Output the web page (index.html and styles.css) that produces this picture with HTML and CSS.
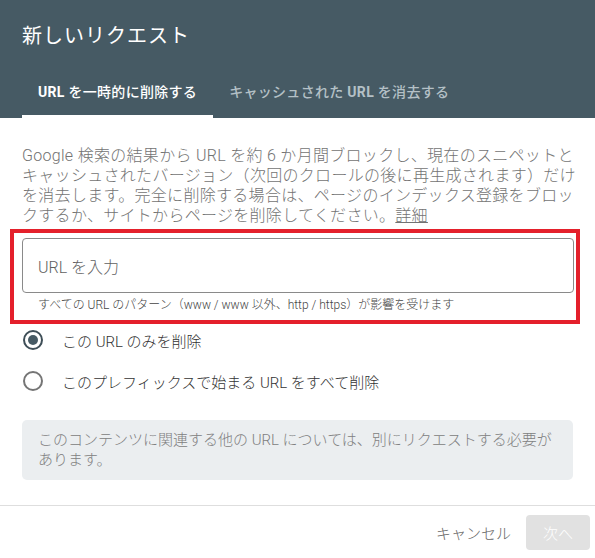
FILE: index.html
```html
<!DOCTYPE html>
<html lang="ja">
<head>
<meta charset="utf-8">
<title>新しいリクエスト</title>
<link rel="stylesheet" href="styles.css">
</head>
<body>
<div class="dialog">
  <header class="head">
    <h1 class="title">新しいリクエスト</h1>
    <nav class="tabs">
      <div class="tab active"><b>URL</b> を一時的に削除する</div>
      <div class="tab">キャッシュされた <b>URL</b> を消去する</div>
    </nav>
  </header>
  <main class="content">
    <p class="desc">Google 検索の結果から URL を約 6 か月間ブロックし、現在のスニペットとキャッシュされたバージョン（次回のクロールの後に再生成されます）だけを消去します。完全に削除する場合は、ページのインデックス登録をブロックするか、サイトからページを削除してください。<a class="more" href="#">詳細</a></p>
    <div class="highlight">
      <div class="field"><span class="placeholder">URL を入力</span></div>
      <div class="hint">すべての URL のパターン（www / www 以外、http / https）が影響を受けます</div>
    </div>
    <div class="radios">
      <label class="radio"><span class="dot checked"></span><span class="rlabel">この URL のみを削除</span></label>
      <label class="radio"><span class="dot"></span><span class="rlabel">このプレフィックスで始まる URL をすべて削除</span></label>
    </div>
    <div class="info">このコンテンツに関連する他の URL については、別にリクエストする必要があります。</div>
  </main>
  <footer class="foot">
    <button class="btn cancel">キャンセル</button>
    <button class="btn next">次へ</button>
  </footer>
</div>
</body>
</html>
```
FILE: styles.css
```css
* { box-sizing: border-box; }
html, body { margin: 0; padding: 0; background: #fff; }
body {
  font-family: Roboto, "Noto Sans CJK JP", sans-serif;
  width: 595px;
  height: 558px;
  overflow: hidden;
}
.dialog { display: flex; flex-direction: column; height: 558px; }
.head {
  background: #465a64;
  height: 118px;
  padding: 0 0 0 22px;
  display: flex;
  flex-direction: column;
}
.title {
  margin: 0;
  padding: 23px 0 0 0;
  height: 70px;
  font-size: 20px;
  line-height: 26px;
  font-weight: 400;
  letter-spacing: 1px;
  color: #fff;
}
.tabs { display: flex; height: 48px; }
.tab {
  padding: 0 16px;
  font-size: 14px;
  line-height: 45px;
  font-weight: 500;
  letter-spacing: 0.3px;
  color: #b4c0c6;
  border-bottom: 3px solid transparent;
}
.tab b { font-weight: 700; }
.tab.active { color: #fff; border-bottom-color: #fff; }
.content { padding: 0 22px; flex: 1; }
.desc {
  margin: 28px -13px 0 0;
  font-size: 16px;
  line-height: 20px;
  font-weight: 300;
  letter-spacing: 0.3px;
  color: #737373;
}
.more { color: #737373; text-decoration: underline; }
.highlight {
  margin: 3px -7px 0 -12px;
  border: 4px solid #e4202b;
  padding: 5px 2px 0 8px;
  height: 95px;
}
.field {
  height: 55px;
  border: 1px solid #8a8a8a;
  border-radius: 4px;
  padding: 0 15px;
  display: flex;
  align-items: center;
}
.placeholder { font-size: 16px; font-weight: 300; color: #5f5f5f; }
.hint {
  padding: 4px 0 0 16px;
  font-size: 12px;
  line-height: 16px;
  font-weight: 300;
  color: #444;
}
.radios { display: flex; flex-direction: column; gap: 11px; margin-top: 1px; }
.radio { display: flex; align-items: center; height: 30px; }
.dot {
  width: 20px; height: 20px;
  margin-left: 1px;
  border: 2px solid #757575;
  border-radius: 50%;
  display: flex; align-items: center; justify-content: center;
}
.dot.checked { border-color: #3e4e57; }
.dot.checked::after {
  content: "";
  width: 10px; height: 10px;
  border-radius: 50%;
  background: #465a64;
}
.rlabel { margin-left: 19px; font-size: 15px; font-weight: 300; color: #333; }
.info {
  margin-top: 24px;
  background: #ebeef0;
  border-radius: 5px;
  padding: 10px 16px 10px 16px;
  font-size: 15px;
  line-height: 20px;
  font-weight: 300;
  color: #808080;
  height: 60px;
}
.foot {
  border-top: 1px solid #dedede;
  height: 53px;
  display: flex;
  align-items: center;
  justify-content: flex-end;
  padding-right: 5px;
}
.btn {
  font-family: Roboto, "Noto Sans CJK JP", sans-serif;
  font-size: 15px;
  font-weight: 300;
  border: none;
  background: none;
  height: 35px;
  border-radius: 4px;
}
.cancel { color: #666; padding: 0 15px; }
.next { background: #e1e1e1; color: #fff; width: 64px; }
```
